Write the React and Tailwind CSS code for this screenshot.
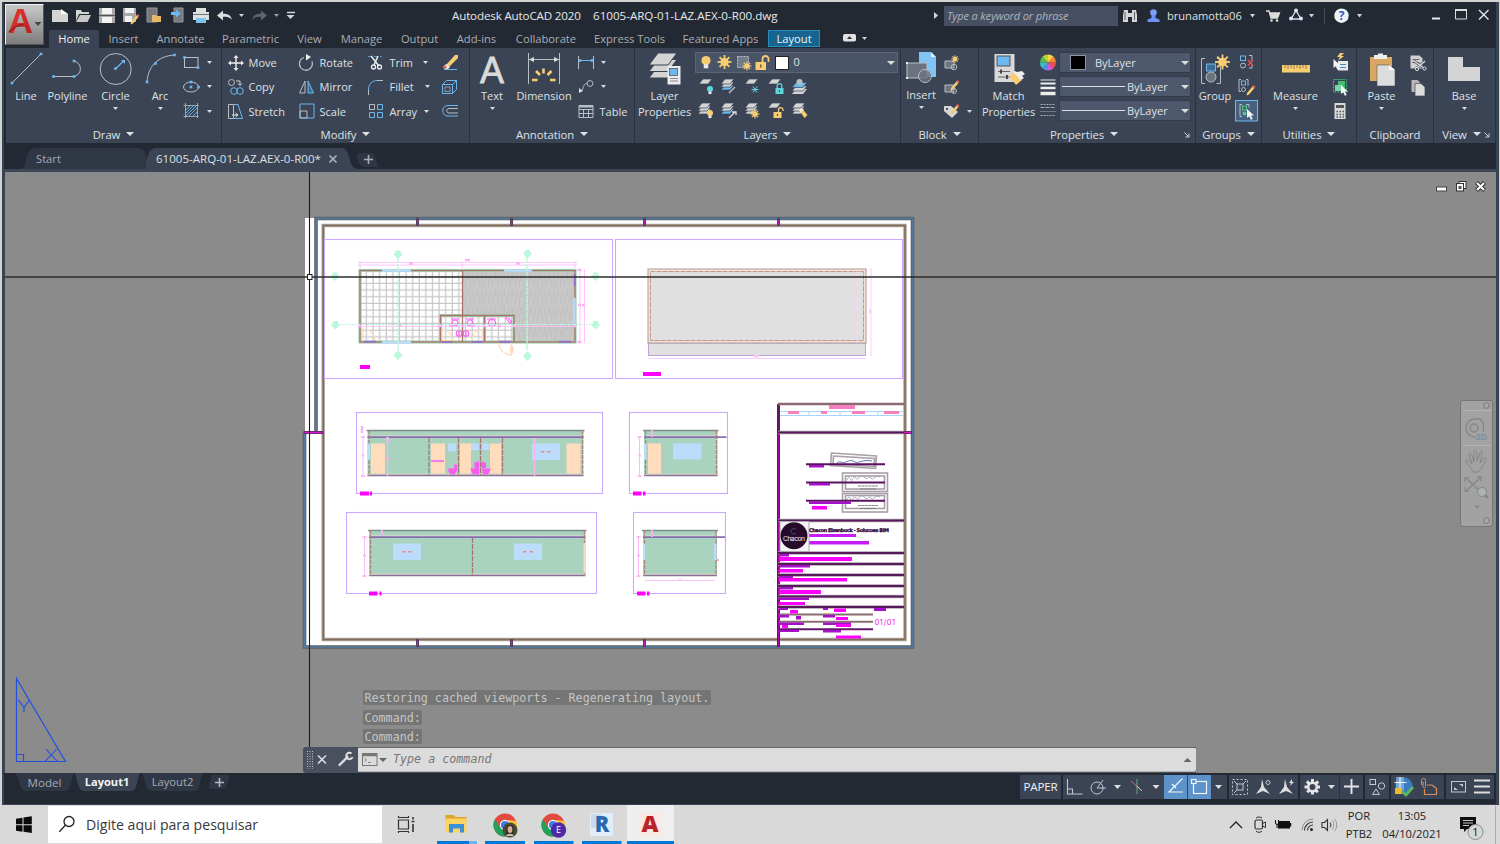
import React from "react";

const BL = "#6cb8f0";
const GR = "#d4d4d4";
const YE = "#f7cd73";

/* Icon cell: b is [x, y, width, height] on the window's own coordinate grid. */
function Ic({ b, children, className = "" }) {
  return (
    <svg
      className={"block shrink-0 " + className}
      width={b[2]}
      height={b[3]}
      viewBox={b.join(" ")}
      fill="none"
      stroke="none"
    >
      {children}
    </svg>
  );
}

function Caret({ className = "" }) {
  return (
    <svg className={"block shrink-0 " + className} width="5" height="3" viewBox="0 0 5 3">
      <path d="M0 0h5L2.5 3z" fill="#d9dce0" />
    </svg>
  );
}

function TitleCaret() {
  return (
    <svg className="ml-[6px] block shrink-0" width="8" height="4" viewBox="0 0 8 4">
      <path d="M0 0h8L4 4z" fill="#e0e2e5" />
    </svg>
  );
}

function Launcher() {
  return (
    <svg className="block shrink-0" width="6" height="6" viewBox="0 0 6 6" fill="none" stroke="#d0d3d8">
      <path d="M.5 .5l4 4M5 1.5V5H1.5" />
    </svg>
  );
}

function Panel({ w, title, arrow = true, launcher = false, children }) {
  return (
    <section className="flex h-[95px] shrink-0 flex-col border-r border-[#2a323f] bg-[#3b4454]" style={{ width: w }}>
      <div className="flex h-[78px] items-start pt-[2px]">{children}</div>
      <div className="flex h-[17px] items-center px-[5px] text-[11.3px] leading-none tracking-[-0.05px]">
        <div className="flex grow items-center justify-center whitespace-nowrap">
          {title}
          {arrow && <TitleCaret />}
        </div>
        {launcher && <Launcher />}
      </div>
    </section>
  );
}

function Big({ w, icon, label, label2, caret }) {
  return (
    <div className="flex shrink-0 flex-col items-center" style={{ width: w }}>
      {icon}
      <div className="flex h-[15px] items-center whitespace-nowrap leading-none">{label}</div>
      {label2 && <div className="flex h-[16px] items-center whitespace-nowrap leading-none">{label2}</div>}
      {caret && <Caret className="mt-[4px]" />}
    </div>
  );
}

function Row({ icon, label, caret, lw }) {
  return (
    <div className="flex h-[24.5px] items-center">
      {icon}
      {label && (
        <span className="whitespace-nowrap pl-[2.5px] leading-none" style={{ width: lw }}>
          {label}
        </span>
      )}
      {caret && <Caret />}
    </div>
  );
}

const dot = (x, y) => <rect key={x + "-" + y} x={x - 1.3} y={y - 1.3} width="2.6" height="2.6" fill={BL} />;

function Sheets({ x, y, n = 3, blue = false }) {
  return (
    <g>
      {Array.from({ length: n })
        .map((_, i) => (
          <path
            key={i}
            d={`M${x + 4} ${y + i * 3}h9l-4 5h-9z`}
            fill={blue && i === n - 1 ? BL : GR}
            stroke="#3b4454"
            strokeWidth=".7"
          />
        ))
        .reverse()}
    </g>
  );
}
const Star = ({ x, y, r = 5 }) => (
  <g>
    {[0, 45, 90, 135].map((a) => (
      <path key={a} d={`M${x - r} ${y}h${2 * r}`} stroke={YE} strokeWidth={r / 4} transform={`rotate(${a} ${x} ${y})`} />
    ))}
    <circle cx={x} cy={y} r={r * 0.58} fill={YE} />
  </g>
);
const Bulb = ({ x, y, r = 3, c = YE }) => (
  <g>
    <circle cx={x} cy={y} r={r} fill={c} />
    <rect x={x - r / 2} y={y + r * 0.8} width={r} height={r * 0.9} fill="#e8e8e8" />
  </g>
);
const Lock = ({ x, y, c = YE, open }) => (
  <g>
    <rect x={x - 4} y={y} width="8" height="6" fill={c} />
    <path d={open ? `M${x + 1} ${y}v-2a2.3 2.3 0 0 1 4.6 0v1` : `M${x - 2.3} ${y}v-2a2.3 2.3 0 0 1 4.6 0v2`} stroke={c} strokeWidth="1.3" />
    <rect x={x - 0.6} y={y + 2} width="1.2" height="2" fill="#5c553f" />
  </g>
);
const Pencil = ({ x, y }) => (
  <g>
    <path d={`M${x} ${y}l5.5-6.5 2 1.6-5.5 6.5-2.5 1z`} fill={YE} />
    <path d={`M${x + 5} ${y - 6.4}l1.3-1.5 2.2 1.6-1.3 1.6z`} fill="#e8645a" />
  </g>
);
const Cursor = ({ x, y }) => <path d={`M${x} ${y}v9l2.2-1.8 1.7 3.6 1.8-.9-1.7-3.4h3z`} fill="#f4f4f4" />;

function QuickAccess() {
  return (
    <div className="flex">
      <Ic b={[48, 4, 23, 24]}>
        <path d="M52 10h9l7 4v8H52z" fill={GR} />
        <path d="M61 9l7 5h-7z" fill="#fff" />
      </Ic>
      <Ic b={[71, 4, 24, 24]}>
        <path d="M76 10h5l1 2h7v2H79l-3 7z" fill={GR} />
        <path d="M80 15h11l-3.5 7H76z" fill="#c8c8c8" />
      </Ic>
      <Ic b={[95, 4, 24, 24]}>
        <path d="M99 8h16v15H99z" fill="#a9a9a9" />
        <path d="M102 8h10v6h-10zM102 17h10v6h-10z" fill="#f3f3f3" />
        <path d="M99 15.5h16" stroke="#555" />
      </Ic>
      <Ic b={[119, 4, 23, 24]}>
        <path d="M123 8h13v14h-13z" fill="#a9a9a9" />
        <path d="M125 8h9v5h-9zM125 16h7v6h-7z" fill="#f3f3f3" />
        <Pencil x={131} y={22} />
      </Ic>
      <Ic b={[142, 4, 24, 24]}>
        <path d="M147 8h10v14h-10z" fill="#77797c" stroke="#9a9a9a" />
        <path d="M152 15h4l1 1h4v6h-9z" fill="#e8b765" />
      </Ic>
      <Ic b={[166, 4, 23, 24]}>
        <path d="M174 8h9v14h-9z" fill="#77797c" stroke="#9a9a9a" />
        <path d="M171 12h5v-2.5l5 4-5 4V15h-5z" fill={BL} />
      </Ic>
      <Ic b={[189, 4, 24, 24]}>
        <path d="M196 8h10v4h-10zM193 12h16v8h-16z" fill="#e0e0e0" />
        <path d="M193 14.5h16" stroke="#777" />
        <path d="M196 18h10v5h-10z" fill="#7cc3f2" />
      </Ic>
      <Ic b={[213, 4, 24, 24]}>
        <path d="M217 15.500l6-5v3.200c5 0 8 1.500 9 6.300-2-3-5-3.300-9-3.300v3.800z" fill="#dcdcdc" />
      </Ic>
      <Ic b={[237, 4, 10, 24]}><path d="M239 14h5l-2.5 3z" fill={GR} /></Ic>
      <Ic b={[247, 4, 25, 24]}>
        <path d="M267 15.500l-6-5v3.200c-5 0-8 1.500-9 6.300 2-3 5-3.300 9-3.300v3.800z" fill="#5d646e" />
      </Ic>
      <Ic b={[272, 4, 10, 24]}><path d="M274 14h5l-2.5 3z" fill="#9ba0a7" /></Ic>
      <Ic b={[282, 4, 17, 24]}>
        <path d="M287 12.5h8" stroke={GR} strokeWidth="1.5" /><path d="M286.5 15h8l-4 4z" fill={GR} />
      </Ic>
    </div>
  );
}

function TitleBar() {
  return (
    <div className="flex h-[28px] items-center">
      <div className="w-[407px] pl-[3px]"><QuickAccess /></div>
      <div className="flex w-[478px] text-[11.6px] text-[#e6e8ea]">
        <span className="w-[141px] whitespace-nowrap tracking-[-0.15px]">Autodesk AutoCAD 2020</span>
        <span className="whitespace-nowrap">61005-ARQ-01-LAZ.AEX-0-R00.dwg</span>
      </div>
      <Ic b={[930, 4, 14, 24]}><path d="M934 12v7l4-3.5z" fill="#d8d8d8" /></Ic>
      <div className="flex h-[20px] w-[174px] items-center whitespace-nowrap bg-[#475062] pl-[3px] text-[11px] italic tracking-[-0.14px] text-[#aeb4be]">
        Type a keyword or phrase
      </div>
      <Ic b={[1118, 4, 24, 24]}>
        <path d="M1124 10h4v12h-5v-7zM1132 10h4l1 5v7h-5zM1128 13h4v4h-4z" fill="#d6d6d6" />
        <path d="M1125 12v8M1134.5 12v8" stroke="#59606a" />
      </Ic>
      <Ic b={[1142, 4, 25, 24]}>
        <circle cx="1153.500" cy="12.500" r="3.300" fill="#7d9df5" />
        <path d="M1151.500 15h4v3l4 1.500v2.500h-12v-2.500l4-1.500z" fill="#6f93f2" />
      </Ic>
      <span className="w-[80px] text-[11.1px] text-[#dfe1e4]">brunamotta06</span>
      <Ic b={[1247, 4, 15, 24]}><path d="M1250 14h5l-2.5 3.5z" fill={GR} /></Ic>
      <Ic b={[1262, 4, 22, 24]}>
        <path d="M1266 11h3l2 7h7M1269.500 13h10l-1.500 4-7.500 1" stroke="#dcdcdc" strokeWidth="1.300" />
        <path d="M1269.500 13h10l-1.500 4h-7.500z" fill="#dcdcdc" />
        <circle cx="1271.500" cy="20.500" r="1.300" fill="#dcdcdc" /><circle cx="1277" cy="20.500" r="1.300" fill="#dcdcdc" />
      </Ic>
      <Ic b={[1284, 4, 22, 24]}>
        <path d="M1296 10.500l5 8.500h-10z" stroke="#d6e4f5" strokeWidth="1.300" />
        <circle cx="1296" cy="10.500" r="2" fill="#d6e4f5" /><circle cx="1291" cy="18.500" r="2" fill="#d6e4f5" /><circle cx="1301" cy="18.500" r="2" fill="#d6e4f5" />
      </Ic>
      <Ic b={[1306, 4, 24, 24]}>
        <path d="M1309 14h5l-2.500 3.500z" fill={GR} /><path d="M1324.500 8v16" stroke="#434b58" />
      </Ic>
      <Ic b={[1330, 4, 22, 24]}>
        <circle cx="1341.500" cy="15.700" r="7.200" fill="#eef1f5" />
        <text x="1341.500" y="20" textAnchor="middle" fontSize="12" fontWeight="700" fill="#2e5cc0" fontFamily="Open Sans">?</text>
      </Ic>
      <Ic b={[1352, 4, 74, 24]}><path d="M1357 14h5l-2.500 3.500z" fill={GR} /></Ic>
      <Ic b={[1426, 4, 22, 24]}><path d="M1432 18.500h8" stroke="#e8e8e8" strokeWidth="2" /></Ic>
      <Ic b={[1448, 4, 24, 24]}><path d="M1455.500 10h11v9h-11z" stroke="#dcdcdc" /><path d="M1455 10h12" stroke="#dcdcdc" strokeWidth="2" /></Ic>
      <Ic b={[1472, 4, 23, 24]}><path d="M1479 10l9.500 9.500M1488.500 10l-9.500 9.500" stroke="#e8e8e8" strokeWidth="1.400" /></Ic>
    </div>
  );
}

const TABS = [
  ["Home", 50], ["Insert", 49], ["Annotate", 65], ["Parametric", 75], ["View", 43], ["Manage", 61],
  ["Output", 55], ["Add-ins", 59], ["Collaborate", 80], ["Express Tools", 87], ["Featured Apps", 95],
];

function TabRow() {
  return (
    <div className="flex h-[18px] items-stretch pl-[4px] text-[11.2px] text-[#a9aeb6]">
      {TABS.map(([t, w], i) => (
        <div
          key={t}
          className={
            i === 0
              ? "flex items-center justify-center rounded-t-[2px] bg-[#3b4454] text-[#eceef0]"
              : "flex items-center justify-center whitespace-nowrap"
          }
          style={{ width: w }}
        >
          {t}
        </div>
      ))}
      <div className="flex h-[17px] w-[52px] items-center justify-center border border-[#2a8bbf] bg-[#17648f] pt-px text-[#eef4f8]">Layout</div>
      <Ic b={[820, 30, 60, 16]}>
        <rect x="843" y="34" width="13" height="7.500" rx="1.800" fill="#e2e2e2" /><path d="M847 39h5l-2.500-3z" fill="#333" />
        <path d="M862 37h5l-2.500 3z" fill={GR} />
      </Ic>
    </div>
  );
}

function Ribbon() {
  const s = "#b9bec6";
  return (
    <div className="flex h-[95px] pl-[2px] text-[11px] text-[#dfe2e6]">
      <Panel w={216} title="Draw">
        <Big w={40} label="Line" icon={<Ic b={[6, 50, 40, 38]}><path d="M12 83l29-29" stroke={s} />{dot(12, 83)}{dot(41, 54)}</Ic>} />
        <Big w={43} label="Polyline" icon={<Ic b={[46, 50, 43, 38]}><path d="M53 76.500h20.500a7.800 7.800 0 0 0 0-15.500" stroke={s} />{dot(53.5, 76.5)}{dot(74, 76.5)}{dot(74, 61)}</Ic>} />
        <Big w={53} label="Circle" caret icon={<Ic b={[89, 50, 53, 38]}><circle cx="115.700" cy="69" r="15.500" stroke={s} /><path d="M116 68.500l8-8" stroke={BL} strokeWidth="1.200" /><path d="M121 60h4v4z" fill={BL} />{dot(115.5, 68.5)}</Ic>} />
        <Big w={36} label="Arc" caret icon={<Ic b={[142, 50, 36, 38]}><path d="M147 82c1-14 9-26 28-27" stroke={s} />{dot(147, 82)}{dot(155.5, 63.5)}{dot(174.5, 55)}</Ic>} />
        <div>
          <Row caret icon={<Ic b={[178, 52, 29, 20]}><rect x="184.500" y="57.500" width="13.500" height="10" stroke={s} />{dot(184.5, 57.5)}{dot(198, 67.5)}</Ic>} />
          <Row caret icon={<Ic b={[178, 77, 29, 20]}><ellipse cx="191" cy="87" rx="7.500" ry="5" stroke={s} />{dot(191, 87)}{dot(198.5, 87)}{dot(191, 82)}</Ic>} />
          <Row caret icon={<Ic b={[178, 101, 29, 20]}><path d="M185.500 103v15M197.500 103v15M183.500 105.500h15M183.500 116.500h15" stroke={s} strokeWidth=".8" /><path d="M186 110l4-4M186 113l7-7M186 116l10-10M189 116l8-8M193 116l4-4" stroke={BL} strokeWidth=".9" /></Ic>} />
        </div>
      </Panel>

      <Panel w={248} title="Modify">
        <div className="pl-[4px]">
          <Row label="Move" lw={51} icon={<Ic b={[226, 52, 20, 20]}><path d="M236 56v14M229 63h14" stroke="#eee" strokeWidth="1.400" /><path d="M233.500 58l2.500-3 2.500 3zM233.500 68l2.500 3 2.500-3zM231 60.500l-3 2.500 3 2.500zM241 60.500l3 2.500-3 2.500z" fill="#eee" /></Ic>} />
          <Row label="Copy" lw={51} icon={<Ic b={[226, 77, 20, 20]}><circle cx="231.500" cy="82.500" r="3" stroke={s} /><circle cx="234" cy="91" r="3.300" stroke={BL} /><circle cx="240" cy="91" r="3.300" stroke={BL} /><path d="M236 81h4v4M238 83.500l2 2 2-2" stroke={GR} /></Ic>} />
          <Row label="Stretch" lw={51} icon={<Ic b={[226, 101, 20, 20]}><path d="M228.500 104.500h5v14h-5z" stroke={s} /><path d="M234 104.500h4l4.500 14H234" stroke={BL} /><path d="M232 115h5M235.500 113l2.500 2-2.500 2" stroke="#eee" /></Ic>} />
        </div>
        <div>
          <Row label="Rotate" lw={48} icon={<Ic b={[297, 52, 20, 20]}><path d="M304 57.500a6.500 6.500 0 1 0 8 4" stroke={s} strokeWidth="1.300" /><path d="M306 54l5 3-5 3.500z" fill="#eee" /></Ic>} />
          <Row label="Mirror" lw={48} icon={<Ic b={[297, 77, 20, 20]}><path d="M305 81v12h-5.500z" stroke={s} /><path d="M308 81v12h5.500z" stroke={BL} fill="#3f6c93" /></Ic>} />
          <Row label="Scale" lw={48} icon={<Ic b={[297, 101, 20, 20]}><path d="M300 104h14v14h-14z" stroke={BL} /><path d="M300 111h7v7h-7z" stroke={s} /></Ic>} />
        </div>
        <div>
          <Row label="Trim" lw={36} caret icon={<Ic b={[365, 52, 22, 20]}><path d="M368 56.500h14" stroke="#5a95c0" strokeDasharray="4 2" /><path d="M371 56l8 10M378 56l-4 9" stroke="#eee" strokeWidth="1.500" /><circle cx="373.500" cy="67" r="2" stroke="#eee" strokeWidth="1.300" /><circle cx="379.500" cy="67" r="2" stroke="#eee" strokeWidth="1.300" /></Ic>} />
          <Row label="Fillet" lw={38} caret icon={<Ic b={[365, 77, 22, 20]}><path d="M368.500 92v-2c0-6 3.500-9.500 9-9.500" stroke={BL} /><path d="M377 80.500h6M368.500 90v5" stroke={s} /></Ic>} />
          <Row label="Array" lw={37} caret icon={<Ic b={[365, 101, 22, 20]}><path d="M369.500 104.500h5v5h-5z" stroke={s} /><path d="M377.500 104.500h5v5h-5zM369.500 112.500h5v5h-5zM377.500 112.500h5v5h-5z" stroke={BL} /></Ic>} />
        </div>
        <div className="ml-[7px]">
          <Row icon={<Ic b={[437, 52, 22, 20]}><path d="M444 69.500h13" stroke={BL} /><path d="M446 65l9-10h3v3l-9 9z" fill={YE} /><path d="M443 67l3-3 4 3-2 2h-3z" fill="#f3e9e5" /><path d="M443 67l2-2 2 2.500-2 1.500z" fill="#e8645a" /></Ic>} />
          <Row icon={<Ic b={[437, 77, 22, 20]}><path d="M442.500 84.500h10v9h-10zM442.500 84.500l4-4h10v9l-4 4M452.500 84.500l4-4" stroke={BL} /><path d="M445 87h5v4.500h-5z" stroke={s} strokeWidth=".7" /></Ic>} />
          <Row icon={<Ic b={[437, 101, 22, 20]}><path d="M458 105.500h-10c-7 0-7 10.500 0 10.500h10" stroke={BL} /><path d="M458 108.500h-9c-3 0-3 4.500 0 4.500h9" stroke={s} /></Ic>} />
        </div>
      </Panel>

      <Panel w={165} title="Annotation">
        <Big w={44} label="Text" caret icon={<Ic b={[470, 50, 44, 38]} className="overflow-visible"><text x="492" y="82.500" textAnchor="middle" fontFamily="Liberation Sans" fontSize="37" fill="#dadada" stroke="#dadada" strokeWidth=".8" textLength="24" lengthAdjust="spacingAndGlyphs">A</text></Ic>} />
        <Big w={60} label="Dimension" icon={<Ic b={[514, 50, 60, 38]}><path d="M528.500 53v31M559.500 53v31M529 59.500h30" stroke={s} /><path d="M529 59.500l5-2.500v5zM559 59.500l-5-2.500v5z" fill="#ddd" /><path d="M536 71l4 4M543.500 68.500v5M551.500 71l-4 4M532 80h5.500M550 80h5.500" stroke={YE} strokeWidth="2.600" /></Ic>} />
        <div>
          <Row caret icon={<Ic b={[574, 52, 27, 20]}><path d="M578.500 56v13M593.500 56v13" stroke={s} /><path d="M580 60.500h12" stroke={BL} />{dot(580, 60.5)}{dot(592, 60.5)}</Ic>} />
          <Row caret icon={<Ic b={[574, 77, 27, 20]}><circle cx="590" cy="83.500" r="2.900" stroke={s} /><path d="M587 83.500c-4 0-3 5-6 8" stroke={s} /><path d="M579 93v-5l4 3z" fill="#ddd" /></Ic>} />
          <Row label="Table" lw={34} icon={<Ic b={[574, 101, 23, 20]}><path d="M579 105.500h14v12h-14zM579 109.500h14M579 113.500h14M583.500 109v9M588.500 109v9" stroke={s} /><path d="M579 105.500h14v2h-14z" fill={s} /></Ic>} />
        </div>
      </Panel>

      <Panel w={266} title="Layers">
        <Big w={59} label="Layer" label2="Properties" icon={<Ic b={[635, 50, 59, 38]}>
          <path d="M658 66h19l-9 12h-19z" fill={GR} stroke="#3b4454" /><path d="M658 59.500h19l-9 12h-19z" fill={GR} stroke="#3b4454" /><path d="M658 53h19l-9 12h-19z" fill={GR} stroke="#3b4454" />
          <rect x="667.500" y="66" width="13" height="18.500" fill="#ececec" /><rect x="669.500" y="68.500" width="8" height="7" fill={BL} stroke="#555" strokeWidth=".8" /><path d="M670 78.500h8M670 81h8" stroke="#888" />
        </Ic>} />
        <div>
          <div className="ml-px mt-[2px] flex h-[21px] w-[203px] items-center border border-[#5a657a] bg-[#4a5467]">
            <Ic b={[696, 53, 20, 19]}><Bulb x={706} y={60.5} r={4.6} /></Ic>
            <Ic b={[716, 53, 18, 19]}><Star x={724.5} y={62} r={7} /></Ic>
            <Ic b={[734, 53, 19, 19]}><path d="M737.500 56.500h11v11h-11z" stroke={s} strokeDasharray="2 1" fill="#737c8a" /><Star x={747} y={66} r={4.5} /></Ic>
            <Ic b={[753, 53, 20, 19]}><rect x="755.500" y="62" width="10.500" height="8" fill={YE} /><path d="M762.500 62v-3a3 3 0 0 1 6 0v3" stroke={YE} strokeWidth="1.800" /><rect x="760" y="64.500" width="1.500" height="3" fill="#6f5e33" /></Ic>
            <div className="ml-[2px] h-[14px] w-[13.5px] border border-[#222] bg-white" />
            <span className="ml-[5px] grow">0</span>
            <Ic b={[886, 53, 12, 19]}><path d="M888 61h8l-4 4z" fill="#dcdcdc" /></Ic>
          </div>
          <div className="flex h-[24px] items-center pt-[4px]">
            <Ic b={[694, 77, 23, 20]}><Sheets x={699} y={79} n={1} /><Bulb x={710} y={89} c="#5fd6dc" /></Ic>
            <Ic b={[717, 77, 24, 20]}><Sheets x={721} y={79} blue /><path d="M729 93l6-6" stroke="#bbb" strokeWidth="1.500" /></Ic>
            <Ic b={[741, 77, 24, 20]}><Sheets x={745} y={79} n={1} /><path d="M751.500 89.500h7M753 86.500l4 6M757 86.500l-4 6" stroke="#5fd6dc" /></Ic>
            <Ic b={[765, 77, 24, 20]}><Sheets x={768} y={79} n={1} /><Lock x={779.5} y={88} c="#5fd6dc" /></Ic>
            <Ic b={[789, 77, 24, 20]}><path d="M796 89h11l-4 5h-11z" fill={GR} /><path d="M796 86h11l-4 5h-11z" fill={GR} stroke="#3b4454" strokeWidth=".7" /><path d="M796 82.500h11l-4 5h-11z" fill={BL} stroke="#3b4454" strokeWidth=".7" /><circle cx="799.500" cy="82" r="3" fill="#bdbdbd" /></Ic>
          </div>
          <div className="flex h-[24px] items-center pt-[4px]">
            <Ic b={[694, 101, 23, 20]}><Sheets x={698} y={103} /><Bulb x={710} y={113} /></Ic>
            <Ic b={[717, 101, 24, 20]}><Sheets x={721} y={103} blue /><path d="M729 118l6-6M732 112h4v3" stroke="#ddd" strokeWidth="1.300" /></Ic>
            <Ic b={[741, 101, 24, 20]}><Sheets x={745} y={103} /><Star x={755} y={114} r={4.5} /></Ic>
            <Ic b={[765, 101, 24, 20]}><Sheets x={768} y={103} n={1} /><Lock x={777.5} y={112} open /></Ic>
            <Ic b={[789, 101, 24, 20]}><Sheets x={792} y={103} /><path d="M799 110l2.500-2 6 7-3 3z" fill={YE} /><path d="M799 110l2.500-2 1.500 2-2.500 2z" fill="#eee" /></Ic>
          </div>
        </div>
      </Panel>

      <Panel w={78} title="Block">
        <Big w={40} label="Insert" caret icon={<Ic b={[901, 50, 40, 37]}><path d="M919 52h12l5 5v20h-17z" fill="#81c4f3" /><path d="M931 52l5 5h-5z" fill="#d9effc" /><path d="M907 63h20v15h-20z" fill="#6d737e" stroke={s} /><circle cx="925" cy="76" r="6.500" fill="#6d737e" fillOpacity=".8" stroke={s} />{[[907, 63], [907, 78]].map((p) => <rect key={p[1]} x={p[0] - 1} y={p[1] - 1} width="2" height="2" fill="#eee" />)}</Ic>} />
        <div>
          <Row icon={<Ic b={[941, 52, 25, 20]}><path d="M945 61h9v7h-9z" fill="#6d737e" stroke={s} /><circle cx="954" cy="67" r="2.800" stroke={s} /><Star x={955} y={59} r={3.8} /></Ic>} />
          <Row icon={<Ic b={[941, 77, 25, 20]}><path d="M945 85h9v7h-9z" fill="#6d737e" stroke={s} /><circle cx="954" cy="91" r="2.500" stroke={s} /><Pencil x={951} y={88} /></Ic>} />
          <Row caret icon={<Ic b={[941, 101, 26, 20]}><path d="M944 106h7l7 6-6 6-8-7z" fill={GR} /><circle cx="947" cy="109" r="1" fill="#333" /><Pencil x={951} y={112} /></Ic>} />
        </div>
      </Panel>

      <Panel w={217} title="Properties" launcher>
        <Big w={59} label="Match" label2="Properties" icon={<Ic b={[979, 50, 59, 38]}><rect x="994.500" y="54" width="20" height="28" fill="#d9d9d9" /><rect x="997" y="56" width="13" height="10" fill={BL} stroke="#555" /><path d="M998 71.500h12M998 77h12" stroke="#666" /><path d="M1001 69.500v4M1007 75v4" stroke="#444" strokeWidth="2" /><path d="M1009 76l6-5 7 9-6 5z" fill={YE} /><path d="M1014 71l3 1 5-1 3 3-3 2 2 2-3 2-7-7z" fill="#eee" /></Ic>} />
        <div className="w-[21px]">
          <Row icon={<Ic b={[1038, 52, 21, 20]}>
            <g transform="translate(1048 62.500)">
              {["#ffd23e", "#f5873b", "#e8504e", "#d556c9", "#4f8df0", "#3ac3c9", "#58bb4d", "#b6d33f"].map((c, i) => (
                <path key={c} d="M0 0L0-8A8 8 0 0 1 5.660-5.660z" fill={c} transform={`rotate(${i * 45})`} />
              ))}
            </g>
          </Ic>} />
          <Row icon={<Ic b={[1038, 77, 21, 20]}><path d="M1040.500 80h15" stroke="#eee" /><path d="M1040.500 83.500h15" stroke="#eee" strokeWidth="2" /><path d="M1040.500 88h15" stroke="#eee" strokeWidth="2.500" /><path d="M1040.500 93.500h15" stroke="#eee" strokeWidth="3.500" /></Ic>} />
          <Row icon={<Ic b={[1038, 101, 21, 20]}><path d="M1040.500 104.500h15M1040.500 115.500h15" stroke="#aab" strokeDasharray="2 1" /><path d="M1040.500 107.500h15" stroke="#aab" strokeDasharray="4 1" /><path d="M1040.500 111.500h15" stroke="#aab" strokeDasharray="1 1" /></Ic>} />
        </div>
        <div className="flex flex-col gap-[3px] pt-[2px]">
          <div className="flex h-[21px] w-[132px] items-center border border-[#333c4a] bg-[#4d586d]">
            <div className="ml-[10px] h-[15px] w-[16px] border border-[#8d95a3] bg-black" />
            <span className="ml-[9px] grow pt-px">ByLayer</span>
            <Ic b={[1180, 53, 11, 19]}><path d="M1182 61h8l-4 4z" fill="#dcdcdc" /></Ic>
          </div>
          {[0, 1].map((k) => (
            <div key={k} className="flex h-[21px] w-[132px] items-center border border-[#333c4a] bg-[#4d586d]">
              <div className="ml-[2px] h-px w-[63px] bg-[#e0e2e6]" />
              <span className="ml-[2px] grow pt-px">ByLayer</span>
              <Ic b={[1180, 53, 11, 19]}><path d="M1182 61h8l-4 4z" fill="#dcdcdc" /></Ic>
            </div>
          ))}
        </div>
      </Panel>

      <Panel w={66} title="Groups">
        <Big w={38} label="Group" icon={<Ic b={[1196, 50, 38, 38]}><path d="M1205 58.500h-3.500v25h3.500M1217 58.500h3.500M1220.500 66v17.500h-4" stroke={s} /><rect x="1206.500" y="64" width="9" height="7" fill="#3f6c93" stroke={BL} /><circle cx="1211" cy="77" r="5" fill="#6d737e" stroke={s} /><Star x={1222.5} y={62} r={7.5} /></Ic>} />
        <div>
          <Row icon={<Ic b={[1234, 52, 25, 20]}><path d="M1249 55.500h3v5M1252 65v3h-3" stroke={s} /><rect x="1240.500" y="56" width="5" height="4.500" stroke={BL} /><circle cx="1243" cy="65.500" r="2.500" stroke={s} /><path d="M1248 60l5 5.500M1253 60l-5 5.500" stroke="#e8504e" strokeWidth="1.500" /></Ic>} />
          <Row icon={<Ic b={[1234, 77, 25, 20]}><path d="M1241 79.500h-2v12h2M1246 79.500h2v6" stroke={s} /><rect x="1241.500" y="81" width="4" height="4" stroke={BL} /><circle cx="1243.500" cy="89.500" r="2" stroke={s} /><Pencil x={1247} y={93} /></Ic>} />
          <Row icon={<Ic b={[1234, 100, 25, 22]}><rect x="1235.500" y="100.500" width="22" height="20.500" stroke={BL} fill="#46617f" /><path d="M1242 104.500h-2v12h2M1246 104.500h3v3" stroke={s} /><rect x="1242.500" y="106" width="4" height="4" stroke="#58c58a" /><circle cx="1244.500" cy="113.500" r="2" fill="#58c58a" /><Cursor x={1247} y={109} /></Ic>} />
        </div>
      </Panel>

      <Panel w={95} title="Utilities">
        <Big w={67} label="Measure" caret icon={<Ic b={[1262, 50, 67, 38]}><rect x="1282" y="65" width="28" height="7.500" fill={YE} /><path d="M1285 65v3M1288 65v4M1291 65v3M1294 65v4M1297 65v3M1300 65v4M1303 65v3M1306 65v4" stroke="#86683a" strokeWidth=".8" /></Ic>} />
        <div>
          <Row icon={<Ic b={[1329, 52, 24, 20]}><rect x="1338" y="61" width="10" height="9.500" fill="#e8e8e8" /><path d="M1340 64.500h6M1340 67.500h6" stroke="#3b8ed0" /><path d="M1340 53l-3 4h3l-2 4 6-5h-3l3-3z" fill={YE} /><Cursor x={1333.5} y={59} /></Ic>} />
          <Row icon={<Ic b={[1329, 77, 24, 20]}><rect x="1333.500" y="79.500" width="13" height="12.500" stroke="#48ba76" strokeDasharray="2 1" /><rect x="1338" y="81" width="7" height="7" fill="#48ba76" /><rect x="1335" y="85" width="7" height="6" fill="#7bd7a0" /><Cursor x={1341} y={85} /></Ic>} />
          <Row icon={<Ic b={[1329, 101, 24, 20]}><rect x="1334.500" y="103" width="11" height="16" fill="#d9d9d9" /><rect x="1336" y="105" width="8" height="3" fill="#555" /><path d="M1336.500 111.500h8M1336.500 114.500h8M1336.500 117h8" stroke="#555" strokeDasharray="1.5 1.5" strokeWidth="1.500" /></Ic>} />
        </div>
      </Panel>

      <Panel w={77} title="Clipboard" arrow={false}>
        <Big w={49} label="Paste" caret icon={<Ic b={[1357, 50, 49, 38]}><path d="M1370 57h22v24h-22z" fill="#d9a762" /><rect x="1374" y="55" width="13" height="4" fill="#eee" /><rect x="1378" y="53.500" width="5" height="3" fill="#eee" /><path d="M1377 65h12l6 5v16h-18z" fill="#dcdcdc" stroke="#3b4454" strokeWidth=".5" /><path d="M1389 65l6 5h-6z" fill="#fff" /></Ic>} />
        <div>
          <Row icon={<Ic b={[1406, 52, 24, 20]}><path d="M1410.500 55.500h9l3 3v10h-12z" fill="#d0d0d0" /><path d="M1412.500 59.500h7M1412.500 62.500h7" stroke="#666" /><path d="M1414 61l11 8M1425 61l-9 8" stroke="#3b4454" strokeWidth="2.600" /><path d="M1414 61l9 6.500M1425 61l-8 7" stroke="#ddd" strokeWidth="1.400" /><circle cx="1424.500" cy="68.500" r="1.600" stroke="#ddd" /><circle cx="1417" cy="69" r="1.600" stroke="#ddd" /></Ic>} />
          <Row icon={<Ic b={[1406, 77, 24, 20]}><path d="M1411.500 80h6l3 3v9h-9z" fill="#b8b8b8" /><path d="M1415 83.500h6l4 3.500v9h-10z" fill="#dcdcdc" stroke="#3b4454" strokeWidth=".7" /></Ic>} />
        </div>
      </Panel>

      <Panel w={62} title="View" launcher>
        <Big w={60} label="Base" caret icon={<Ic b={[1434, 50, 60, 38]}><path d="M1448 57h15v10h17v14h-32z" fill="#d4d4d4" /></Ic>} />
      </Panel>
    </div>
  );
}

function TabShape({ w, h, color, d }) {
  return (
    <svg className="absolute left-0 top-0" width={w} height={h} viewBox={`0 0 ${w} ${h}`}>
      <path d={d} fill={color} />
    </svg>
  );
}

function DocTabs() {
  return (
    <div className="flex h-[26px] items-end pl-[14px] text-[11.55px]">
      <div className="relative flex h-[21px] w-[128px] items-center pl-[18px] pt-px text-[11.2px] text-[#a4aab4]">
        <TabShape w={128} h={21} color="#2f3744" d="M0 21c6 0 7-4 8-9C10 3 12 0 18 0h102c5 0 8 4 8 9v12z" />
        <span className="relative">Start</span>
      </div>
      <div className="relative flex h-[21px] w-[212px] items-center pl-[10px] text-[#dde0e4]">
        <TabShape w={212} h={21} color="#3b4454" d="M0 21c-1-10 3-21 10-21h185c6 0 7 6 9 12 1 5 4 9 8 9z" />
        <span className="relative w-[173px] whitespace-nowrap">61005-ARQ-01-LAZ.AEX-0-R00*</span>
        <svg className="relative block" width="8" height="8" viewBox="0 0 8 8"><path d="M.5 .5l7 7M7.500 .5l-7 7" stroke="#a8adb5" strokeWidth="1.600" /></svg>
      </div>
      <div className="relative -ml-px flex h-[16px] w-[22px] items-center justify-center self-end">
        <TabShape w={22} h={16} color="#2f3744" d="M0 4c0-3 2-4 4-4h11c4 0 4 12 7 14H7C3 14 2 10 0 4z" />
        <svg className="relative mb-[3px] block" width="9" height="9" viewBox="0 0 9 9"><path d="M4.500 0v9M0 4.500h9" stroke="#a8adb5" strokeWidth="1.600" /></svg>
      </div>
    </div>
  );
}

const Rects = ({ list, fill }) => list.map((r, i) => <rect key={i} x={r[0]} y={r[1]} width={r[2]} height={r[3]} fill={fill} />);

function Elevation({ x, y, w, h, cols = [], doors = [], windows = [], side }) {
  return (
    <g>
      <rect x={x} y={y} width={w} height={h} fill="#a9d2bf" />
      <path d={`M${x - 1} ${y + 0.5}h${w + 2}`} stroke="#7e8f86" strokeWidth="1.300" />
      <path d={`M${x + 2} ${y + 6}h${w - 4}`} stroke="#e8dcc8" />
      <path d={`M${x} ${y + 7.2}h${w + (side || 0)}`} stroke="#8a6db0" strokeWidth="1.700" />
      <path d={`M${x} ${y + h - 1.8}h${w}`} stroke="#e8dcc8" />
      <path d={`M${x} ${y + h - 0.5}h${w}`} stroke="#8a6f9c" strokeWidth="1.500" />
      <path d={`M${x + 1.5} ${y}v${h}M${x + w - 1} ${y}v${h}`} stroke="#a98279" strokeWidth="1.300" strokeDasharray="4 1" />
      {cols.map((c) => <path key={c} d={`M${c} ${y + 8}v${h - 8}`} stroke="#a47570" strokeWidth="1.200" strokeDasharray="5 1" />)}
      <Rects list={windows} fill="#bcdcfb" />
      <Rects list={doors} fill="#ffdcbc" />
      <g stroke="#ffb8fa" strokeWidth="1">
        <path d={`M${x - 4.5} ${y + 7}v${h - 7}`} />
        <path d={`M${x - 6.5} ${y + 7}h4M${x - 6.5} ${y + h}h4M${x - 6} ${y + 25.5}h3`} strokeWidth="2" />
      </g>
    </g>
  );
}

const Mark = ({ x, y }) => (
  <g fill="#b9f8da"><path d={`M${x - 2.5} ${y - 3.5}h5v2.500h1.500v2l-4 4-4-4v-2h1.500z`} /></g>
);

function Drawing() {
  const ticks = [417.5, 511.5, 644.5, 778.5];
  return (
    <svg className="block" width="1491" height="601" viewBox="5 172 1491 601" fill="none">
      <defs>
        <pattern id="tiles" x="360.500" y="270.500" width="6.600" height="6.700" patternUnits="userSpaceOnUse">
          <path d="M6 0v6.700M0 6h6.600" stroke="#c6c6c6" strokeWidth="1.200" />
        </pattern>
        <pattern id="deck" width="9" height="17" patternUnits="userSpaceOnUse">
          <rect width="9" height="17" fill="#c8c8c8" />
          <path d="M.5 0v7M2.500 6v9M4.500 1v10M6.500 8v9M8 2v7" stroke="#bdbdbd" strokeWidth=".7" />
        </pattern>
      </defs>
      <path d="M305 218h608v430h-608z" fill="#fff" />
      {/* sheet frame */}
      <path d="M304.500 432.500v214.500h608v-428.500h-596.500v214" stroke="#5c5f63" strokeWidth="3.600" />
      <path d="M304.500 432.500v214.500h608v-428.500h-596.500v214" stroke="#557ca3" strokeWidth="1.700" />
      <path d="M323.200 225.500h581.800v414h-581.800z" stroke="#aaa39c" strokeWidth="3.400" />
      <path d="M323.200 225.500h581.800v414h-581.800z" stroke="#836c57" strokeWidth="1.500" />
      {ticks.map((t) => (
        <g key={t}>
          <path d={`M${t} 218v8M${t} 639v8`} stroke="#55405a" strokeWidth="3" />
          <path d={`M${t} 220v5M${t} 641v5`} stroke="#c416c0" strokeWidth="1.200" />
        </g>
      ))}
      <path d="M303.500 432.500h20M903 432.500h9" stroke="#702a70" strokeWidth="3" />
      <path d="M304.500 432.500h18M904 432.500h7" stroke="#e012d8" strokeWidth="1.200" />

      {/* viewports */}
      <g stroke="#cda8ff" strokeWidth="1.100">
        <rect x="324.500" y="239.500" width="288" height="139" /><rect x="615.500" y="239.500" width="287" height="139" />
        <rect x="356.500" y="412.500" width="246" height="81" /><rect x="629.500" y="412.500" width="98" height="81" />
        <rect x="346.500" y="512.500" width="250" height="81" /><rect x="633.500" y="512.500" width="92" height="81" />
      </g>

      {/* floor plan */}
      <rect x="360" y="270" width="103" height="72" fill="url(#tiles)" />
      <rect x="463" y="270" width="112" height="72" fill="url(#deck)" />
      <rect x="440" y="315" width="74" height="27" fill="#fff" />
      <rect x="440" y="315" width="74" height="27" fill="url(#tiles)" />
      <g stroke="#a6d0b6" strokeWidth="3.200">
        <rect x="360" y="270.500" width="215" height="71.500" /><path d="M440.500 342v-26.500h73.500v26.500M484.500 316v26" />
      </g>
      <g stroke="#a8736b" strokeWidth="1.300">
        <rect x="360" y="270.500" width="215" height="71.500" /><path d="M462.500 270v72M440.500 342v-26.500h73.500v26.500M484.500 316v26" />
      </g>
      <path d="M382 270.500h29M504 270.500h28M382 342.300h29M574.500 298v26" stroke="#b9dcfb" strokeWidth="2.400" />
      <path d="M364 341.700h12M442 342h10M472 342h11M499 341.700h12M559 341.700h12M574.800 274v12" stroke="#9b6fc8" strokeWidth="2" />
      <path d="M442 340.500h10" stroke="#efe070" />
      <path d="M511.500 343v12c-7 0-12-5-13-12M363 340v-11c6 0 11 4 12 11M442 340v-10c6 0 10 4 11 10M482 340v-10c-6 0-9 4-10 10" stroke="#ffdcbc" strokeWidth="1.200" />
      <rect x="510" y="346" width="3.500" height="7" fill="#ffdcbc" />
      <g stroke="#fb5cf4" strokeWidth="1.100">
        <circle cx="455" cy="323" r="3" /><circle cx="470" cy="323" r="3" /><circle cx="492" cy="323" r="3.500" /><circle cx="459" cy="333.500" r="2.800" /><circle cx="466" cy="333.500" r="2.800" />
        <path d="M451 319h8M466 319h8M487 319h9M459 331v5M466 331v5M506 317c0 3 3 6 6 6M508 318l4 4" />
      </g>
      <g stroke="#ffc4fb" strokeWidth="1">
        <path d="M358 262.500h219M358 265h219M360 261v7M462 261v7M575 261v7M580 269v74M584.500 269v74M360 326.300h215" />
        <path d="M465 260h5M409 263.500h4M516 263.500h4M398 325.500h4M542 325.500h4M582 305h3M578 305h3M358 326h3M438 326h3M461 326h3M483 326h3M513 326h3M573 326h3M449 326h4M471 326h4M497 326h4M577.500 270h4M577.500 342h4" strokeWidth="2.500" stroke="#ffb0f8" />
      </g>
      <g stroke="#b9f8da"><path d="M398 256v98M527 256v98" strokeDasharray="7 1" strokeWidth="1.300" /><path d="M337 324.500h256" strokeDasharray="2 1" /></g>
      <Mark x={398} y={254} /><Mark x={527.5} y={253.5} /><Mark x={398} y={355} /><Mark x={527.5} y={356} />
      <Mark x={335} y={276} /><Mark x={595.5} y={276} /><Mark x={335.5} y={324.5} /><Mark x={595.5} y={324.5} />

      {/* roof plan */}
      <rect x="648.500" y="343" width="217" height="12.500" fill="#e0e0e0" stroke="#c0a2dc" />
      <rect x="648" y="269" width="218" height="74" fill="#fbe0d6" stroke="#a39d99" />
      <rect x="650.500" y="271.500" width="213" height="69" fill="#e0e0e0" stroke="#bb9a8f" strokeDasharray="5 1" />
      <g stroke="#ffcdfb"><path d="M648 358.500h218M871 268v88M857 269v74" /><path d="M754 356.500h5M870 309.500v4M856.500 303.500v4" strokeWidth="2.500" /></g>
      <Rects fill="#ff00ff" list={[[360, 365, 10, 4], [643, 372, 18, 4], [360, 491.5, 9, 4], [370, 491.5, 2, 4], [633, 491.5, 8.5, 4], [643, 491.5, 2.5, 4], [369, 591.5, 8.5, 4], [379.5, 591.5, 2, 4], [637, 591.5, 8.5, 4], [647, 591.5, 2.5, 4]]} />

      {/* sections and elevations */}
      <Elevation x={367.5} y={430} w={216} h={46} cols={[429, 458.5, 480.5, 502.5]}
        doors={[[371, 443.5, 14, 30], [431, 443.5, 14, 30], [460, 443.5, 11, 30], [490, 443.5, 11, 30], [566.5, 443.5, 14, 30]]}
        windows={[[448, 443.5, 8, 8], [471, 443.5, 8, 6.5], [482, 443.5, 7.5, 6.5], [532, 443.5, 28, 16.5], [367.5, 443.5, 2.5, 16]]} />
      <path d="M431 461h13" stroke="#fb6cf0" strokeWidth="1.800" />
      <path d="M448 468.500h9v2l-2.500 4h-4l-2-3zM454 464l3.500 1.500v4h-3zM470 468.500h9v6h-6zM474 463l5-2v8h-4zM481 461l5 2v5h-5zM482 468.500h9l-3 6h-5z" fill="#fb5cf0" />
      <path d="M387.500 438v38M534.500 438v38" stroke="#f5b8ee" strokeWidth="1.200" />
      <path d="M387.500 437v5M387.500 457v3M534.500 438v4M534.500 450v3M362 426v7" stroke="#f8b4f2" strokeWidth="2.500" />
      <path d="M541 451.700h3.500M547 451.700h3.500" stroke="#e88a90" strokeWidth="1.500" />
      <Elevation x={644} y={430} w={73.5} h={46} side={9} doors={[[648, 443.5, 13, 30]]} windows={[[673, 443.5, 28.5, 16], [644, 443.5, 2.5, 16]]} />
      <Elevation x={369} y={530} w={216.5} h={46} cols={[472.5]} doors={[[583.5, 543, 2, 30]]} windows={[[393, 543.5, 28, 16.5], [514, 543.5, 28, 16.5]]} />
      <path d="M402 551.700h3.500M408 551.700h3.500M523 551.700h3.500M529.500 551.700h3.500" stroke="#e88a90" strokeWidth="1.500" />
      <Elevation x={643} y={530} w={74} h={46} side={8} windows={[[643, 543.5, 2.5, 16.5], [714, 543.5, 2.5, 16.5]]} />
      <path d="M652 430v7M652 530v7M382 530v6" stroke="#f5b0ee" strokeWidth="2" />
      <path d="M645 580.500h70M678 579h4" stroke="#ffc0fb" />
      <path d="M717 560h2" stroke="#f5a" />

      {/* title block */}
      <path d="M778.500 404v243" stroke="#5f1a60" strokeWidth="3" /><path d="M778.500 432v215" stroke="#a508a2" strokeWidth="1" />
      <path d="M778 404h126" stroke="#8a6a72" strokeWidth="2.500" />
      <path d="M780 411.500h124M780 415.500h124M809 411v5M840 411v5M878 411v5" stroke="#a8d4fa" />
      <Rects fill="#f57fbf" list={[[829, 405, 26, 4], [788, 411, 11, 3], [821, 411, 6, 3], [852, 411, 13, 3], [884, 411, 15, 3]]} />
      <g stroke="#b0a2b0" strokeWidth="3.600">
        <path d="M778 432.500h126M778 520.500h126M778 553h126M778 564h126M778 575h126M778 586h126M778 596.500h126M778 607h126" />
      </g>
      <path d="M778 432.500h126M778 520.500h126M778 553h126M778 564h126M778 575h126M778 586h126M778 596.500h126M778 607h126" stroke="#561a5a" strokeWidth="1.900" />
      <path d="M779 614.500h94M779 621.800h94" stroke="#8a6d70" strokeWidth="2" /><path d="M779 629.300h94" stroke="#641668" strokeWidth="2" />
      <g stroke="#a99fa9" strokeWidth="1.600">
        <path d="M831.500 453l45 3-1 12.500-45-3zM833.500 456l41 2.500-.5 8-41-2.500z" />
        <rect x="842.500" y="473" width="45" height="18.500" /><rect x="845.500" y="476" width="39" height="13" /><rect x="842.500" y="493.500" width="45" height="18.500" /><rect x="845.500" y="495.500" width="39" height="13" />
      </g>
      <path d="M837 463c3-3 5 1 9-1s6-2 9 0 8-3 17-1" stroke="#6372b8" />
      <path d="M847 480c1-4 3-3 4 0s2-4 4-3 1 4 4 1 3-3 6 0 4-4 6 0 3-4 9-1M847 500c1-4 3-3 4 0s2-4 4-3 1 4 4 1 3-3 6 0 4-4 6 0 3-4 9-1" stroke="#a5a5b5" strokeWidth=".9" />
      <path d="M858 486h20M860 489h16M858 505.500h20M860 508.500h16" stroke="#777" strokeDasharray="3 .5" strokeWidth=".9" />
      <path d="M806 464.300h79M806 482.500h79M806 500.700h79" stroke="#5b1060" strokeWidth="1.900" />
      <Rects fill="#a411c8" list={[[809, 465, 15, 2.5], [809, 483, 21, 2.5], [809, 501.5, 42, 2.5], [779, 554, 10, 2.5], [779, 565, 31, 2.5], [779, 576, 14, 2.5], [779, 587, 14, 2.5], [779, 597.5, 30, 2.5], [779, 608, 9, 2], [823, 608, 5, 2], [874, 608, 12, 3], [779, 615, 10, 2.5], [823, 615, 12, 2.5], [779, 622.5, 25, 2.5], [823, 622.5, 28, 2.5], [779, 630, 20, 2], [823, 630, 18, 2.5], [796, 616, 5, 3.5]]} />
      <Rects fill="#c51df5" list={[[809, 534, 47, 3], [809, 541, 60, 3.5]]} />
      <Rects fill="#ff00ff" list={[[812, 506, 15, 3.5], [779, 557, 73, 4], [779, 569, 24, 3.5], [779, 578, 68, 3.5], [779, 590, 42, 4], [779, 602, 26, 3], [834, 608.5, 12, 3.5], [790, 610, 8, 3.5], [836, 617, 12, 3], [836, 624, 15, 3], [782, 625, 6, 3], [836, 635.5, 25, 3]]} />
      <rect x="780" y="521.500" width="29" height="30" fill="#f5f2f5" stroke="#aaa" />
      <circle cx="794" cy="535.700" r="13.500" fill="#260a2c" />
      <path d="M796 529.500a2.800 2.800 0 1 0 0 3.500" stroke="#3b4a75" />
      <text x="794" y="541" textAnchor="middle" fontFamily="Inter" fontSize="6.800" fill="#f0e8f0" textLength="22">Chacon</text>
      <text x="809" y="532" fontFamily="DejaVu Sans" fontWeight="700" fontSize="5" fill="#32063a" stroke="#32063a" strokeWidth=".3" textLength="80">Chacon Eisenbock - Solucoes BIM</text>
      <text x="874.500" y="625.300" fontFamily="Inter" fontSize="7.500" fill="#f410ee" textLength="20.500">01/01</text>

      {/* layout UCS icon */}
      <path d="M16.500 678.500v83h49zM16.500 754.500h7v7" stroke="#2450e0" strokeWidth="1.200" />
      <text x="17.500" y="711.500" fontFamily="Open Sans" fontWeight="300" fontSize="16" fill="#2450e0" textLength="12.500" lengthAdjust="spacingAndGlyphs">Y</text>
      <text x="44.500" y="760.500" fontFamily="Open Sans" fontWeight="300" fontSize="16" fill="#2450e0" textLength="13" lengthAdjust="spacingAndGlyphs">X</text>

      {/* crosshair */}
      <path d="M309.500 172v601" stroke="#1c1c1c" strokeWidth="1.100" /><path d="M5 277h1491" stroke="#2b2b2b" strokeWidth="1.400" />
      <rect x="307.500" y="274.500" width="4.500" height="5" fill="#fff" stroke="#222" />
    </svg>
  );
}

function NavBar() {
  return (
    <div className="absolute right-[3px] top-[228px] rounded-[3px] border border-[#757575] bg-[#a2a2a2]">
      <svg className="block" width="31" height="125" viewBox="1461 401 31 125" fill="none" stroke="#868686">
        <circle cx="1486.500" cy="405.500" r="3" fill="#939393" /><path d="M1485 404l3 3M1488 404l-3 3" stroke="#bbb" />
        <path d="M1462 410.500h30M1463 445.500h28" stroke="#b2b2b2" />
        <circle cx="1474" cy="428" r="4" strokeWidth="1.300" /><path d="M1483.500 432v-9l-3.500-4h-6a9 9 0 1 0 2 18" strokeWidth="1.300" />
        <text x="1476" y="440" fontFamily="Open Sans" fontWeight="700" fontSize="8.500" fill="#7991a8" stroke="none">2D</text>
        <path d="M1471 468l-5-6c-1-2 1-3 3-1l3 3-3-9c0-2 2-2 3 0l2 7v-10c0-2 2-2 3 0v9l3-8c1-2 3-1 2 1l-2 9 4-5c1-1 3 0 2 2l-5 9-3 3h-5z" />
        <path d="M1466 478l14 13M1480 478l-14 13" strokeWidth="1.200" /><path d="M1465 482v-4h4M1477 477h4v4M1465 487v4h4" strokeWidth="1.300" />
        <circle cx="1482" cy="492" r="4.500" fill="#aeb3b5" /><path d="M1485 495l3 3" strokeWidth="2.500" />
        <path d="M1474 505.500h6l-3 3z" fill="#858585" stroke="none" />
        <circle cx="1486.500" cy="520.500" r="3" fill="#939393" /><path d="M1485 520h3M1485.500 521.500h2" stroke="#bbb" />
      </svg>
    </div>
  );
}

function CommandWindow() {
  const mono = "font-['DejaVu_Sans_Mono',monospace] text-[11.7px]";
  const line = "h-[15px] whitespace-pre rounded-[2px] bg-[#757575] px-[1.5px] leading-[16px]";
  return (
    <div className="absolute bottom-0 left-[298px] w-[893px]">
      <div className={"flex flex-col items-start gap-[4.5px] pb-[3px] pl-[60px] text-[#c6c6c6] " + mono}>
        <div className={line}>Restoring cached viewports - Regenerating layout.</div>
        <div className={line}>Command:</div>
        <div className={line}>Command:</div>
      </div>
      <div className="flex h-[26px] items-center rounded-l-[3px] bg-[#4a515e]">
        <Ic b={[303, 747, 55, 26]}>
          <path d="M307.500 751v18M310 751v18M312.500 751v18" stroke="#c4c7cc" strokeDasharray="1 1.5" />
          <path d="M318 755.500l8 8M326 755.500l-8 8" stroke="#e2e2e2" strokeWidth="1.500" />
          <path d="M339.500 765l8-8" stroke="#dedede" strokeWidth="2.400" strokeLinecap="round" /><path d="M351.500 753.500a3.200 3.200 0 1 0 1 3.500" stroke="#dedede" strokeWidth="2" />
        </Ic>
        <div className={"flex h-[25px] grow items-center self-start rounded-r-[2px] border-b border-t border-t-[#6a6a6a] border-b-[#b4b4b4] bg-[#dcdcdc] italic text-[#777] " + mono}>
          <Ic b={[358, 749, 35, 23]}>
            <rect x="362.500" y="754.500" width="14.500" height="12" stroke="#777" /><path d="M363 756h14" stroke="#777" strokeWidth="2.500" />
            <path d="M364.500 759.500l2 1.500-2 1.500M368 763.500h3" stroke="#777" strokeWidth=".9" /><path d="M379 759h8l-4 4z" fill="#666" />
          </Ic>
          <span className="grow pt-px">Type a command</span>
          <Ic b={[1180, 749, 16, 23]}><path d="M1183.500 763h8l-4-4z" fill="#666" /></Ic>
        </div>
      </div>
    </div>
  );
}

function Canvas() {
  return (
    <div className="relative h-[601px] w-[1491px] overflow-hidden bg-[#8b8b8b]">
      <Drawing />
      <svg className="absolute right-[6px] top-[8px]" width="56" height="14" viewBox="1434 180 56 14" fill="none">
        <rect x="1436.500" y="187" width="10" height="4" fill="#fff" stroke="#444" />
        <path d="M1459 181.500h7v7h-7z" fill="#fff" stroke="#333" /><rect x="1456.500" y="183.500" width="7" height="7.500" fill="#fff" stroke="#333" /><rect x="1458.500" y="186" width="3" height="3" fill="#555" />
        <path d="M1476.500 182.500l8 8M1484.500 182.500l-8 8" stroke="#333" strokeWidth="4" /><path d="M1477 183l7 7M1484 183l-7 7" stroke="#fff" strokeWidth="2" />
      </svg>
      <NavBar />
      <CommandWindow />
    </div>
  );
}

const seg = "flex h-[24px] items-center bg-[#3b4454]";

function StatusBar() {
  const s = "#c4c8ce";
  return (
    <div className="flex h-[31px] pl-[11px]">
      <div className="flex w-[1005px] text-[11.6px] text-[#a4aab4]">
        <div className="relative flex h-[18px] w-[59px] items-center justify-center pt-px">
          <TabShape w={59} h={18} color="#2f3744" d="M0 0h59c-3 4-2 18-9 18H11C4 18 5 4 0 0z" /><span className="relative">Model</span>
        </div>
        <div className="relative flex h-[18px] w-[66px] items-center justify-center pt-px font-bold text-[#f3f4f5]">
          <TabShape w={66} h={18} color="#3b4454" d="M0 0h66c-3 4-2 18-9 18H10C3 18 4 4 0 0z" /><span className="relative text-[11.1px]">Layout1</span>
        </div>
        <div className="relative flex h-[18px] w-[65px] items-center justify-center pt-px">
          <TabShape w={65} h={18} color="#2f3744" d="M2 0h61c-3 4-2 18-9 18H12C5 18 5 4 2 0z" /><span className="relative text-[11.2px]">Layout2</span>
        </div>
        <div className="relative ml-[3px] flex h-[18px] w-[22px] items-center justify-center">
          <TabShape w={22} h={18} color="#2f3744" d="M4 2h18c-2 4-2 14-9 14H2C-1 16 3 6 4 2z" />
          <svg className="relative block" width="9" height="9" viewBox="0 0 9 9"><path d="M4.500 0v9M0 4.500h9" stroke="#b4b8bf" strokeWidth="1.600" /></svg>
        </div>
      </div>
      <div className="flex grow gap-[2px] pt-[2px]">
        <div className={seg + " w-[41px] justify-center text-[11.6px] tracking-[-0.2px] text-[#f0f1f2]"}>PAPER</div>
        <div className={seg}>
          <Ic b={[1063, 775, 24, 24]}><path d="M1067.500 779v15h15M1067.500 789h5v5" stroke={s} strokeWidth="1.100" /></Ic>
          <Ic b={[1087, 775, 24, 24]}><circle cx="1097" cy="788" r="6" stroke={s} /><path d="M1097 788h9M1097 788l6-8" stroke={s} /></Ic>
          <Ic b={[1111, 775, 14, 24]}><path d="M1114 785h7l-3.500 4z" fill="#ddd" /></Ic>
          <Ic b={[1125, 775, 24, 24]}><path d="M1137 779v15" stroke="#58b27c" /><path d="M1131 781l11 10" stroke="#c96a6a" /><path d="M1137 786l5 5" stroke={s} /></Ic>
          <Ic b={[1149, 775, 15, 24]}><path d="M1152.500 785h7l-3.500 4z" fill="#ddd" /></Ic>
          <Ic b={[1164, 775, 24, 24]} className="bg-[#5e93c9]"><path d="M1182.500 778.500l-13.500 13.500h14" stroke="#eef4fa" strokeWidth="1.200" /><path d="M1172 784l4 4" stroke="#eef4fa" strokeWidth="1.500" /><path d="M1187.500 775v24" stroke="#3b4454" /></Ic>
          <Ic b={[1188, 775, 23, 24]} className="bg-[#5e93c9]"><rect x="1193.500" y="781.500" width="13" height="12" stroke="#eef4fa" strokeWidth="1.200" /><rect x="1191.500" y="779.500" width="4.500" height="4" fill="#5e93c9" stroke="#eef4fa" strokeWidth="1.200" /></Ic>
          <Ic b={[1211, 775, 16, 24]}><path d="M1215 785h7l-3.500 4z" fill="#ddd" /></Ic>
        </div>
        <div className={seg}>
          <Ic b={[1229, 775, 23, 24]}><rect x="1232.500" y="779.500" width="15" height="15" stroke={s} strokeDasharray="2 2" /><rect x="1237" y="784" width="6" height="6" stroke={s} /><path d="M1234 781l3 3M1246 781l-3 3M1234 793l3-3" stroke={s} /></Ic>
          <Ic b={[1252, 775, 23, 24]}><path d="M1262 779l2 8 6 7-7-3-7 3 5-7z" fill="#dcdcdc" /><circle cx="1268" cy="782.500" r="2" stroke={s} /></Ic>
          <Ic b={[1275, 775, 23, 24]}><path d="M1285 779l2 8 6 7-7-3-7 3 5-7z" fill="#dcdcdc" /><path d="M1292 779l-3 4h2l-1 3 4-4h-2z" fill="#ddd" /></Ic>
        </div>
        <div className={seg}>
          <Ic b={[1300, 775, 25, 24]}>
            {[0, 45, 90, 135].map((a) => <path key={a} d="M1304.500 787h15.500" stroke="#e4e4e4" strokeWidth="3" transform={`rotate(${a} 1312.500 787)`} />)}
            <circle cx="1312.500" cy="787" r="4.300" stroke="#e4e4e4" strokeWidth="2.500" fill="#3b4454" />
          </Ic>
          <Ic b={[1325, 775, 13, 24]}><path d="M1328 785h7l-3.500 4z" fill="#ddd" /></Ic>
          <Ic b={[1338, 775, 25, 24]}><path d="M1339.500 775v24" stroke="#2a323f" /><path d="M1351.500 779v15M1344 786.500h15" stroke="#e4e4e4" strokeWidth="1.900" /></Ic>
        </div>
        <div className={seg}>
          <Ic b={[1365, 775, 24, 24]}><rect x="1370" y="779.500" width="5.500" height="5" stroke={s} /><circle cx="1381.500" cy="786" r="3.200" stroke={s} /><path d="M1376 789l3.500 5.500h-7z" stroke={s} /></Ic>
        </div>
        <div className={seg}>
          <Ic b={[1391, 775, 25, 24]}><circle cx="1404" cy="786" r="8.500" fill="#3b7cc0" /><path d="M1396 777h8v13h-8z" fill="#8db9e6" fillOpacity=".7" /><path d="M1400 777v12M1394.500 782.500h12" stroke="#fff" /><rect x="1395" y="788" width="7" height="6" fill="#f1b72e" /><path d="M1402 791l4 4 7-8" stroke="#59b85c" strokeWidth="2.800" /></Ic>
          <Ic b={[1416, 775, 28, 24]}><path d="M1424.500 789v5.500h12v-6l-4.500-3.500h-5" stroke="#d98f5f" strokeWidth="1.200" /><path d="M1421.500 785v-4.500a2 2 0 0 1 4 0v6a1.200 1.200 0 0 1-2.400 0v-5" stroke="#d98f5f" /></Ic>
        </div>
        <div className={seg}>
          <Ic b={[1446, 775, 24, 24]}><rect x="1451.500" y="781.500" width="14" height="10.500" stroke={s} /><path d="M1459 784h4v3zM1454 787v3h4z" fill={s} /></Ic>
          <Ic b={[1470, 775, 24, 24]}><path d="M1474 780.500h16M1474 786.500h16M1474 792.500h16" stroke="#dedede" strokeWidth="1.900" /></Ic>
        </div>
      </div>
    </div>
  );
}

function Chrome({ cx }) {
  return (
    <g transform={`translate(${cx} 825)`}>
      <circle r="11.500" fill="#e04a3f" />
      <path d="M-10-5.700A11.500 11.500 0 0 0 1 11.500L5 3-5 3z" fill="#1fa25b" />
      <path d="M11.200-4A11.500 11.500 0 0 1 1 11.500L5 3 3-5z" fill="#fbc42f" />
      <circle r="5.200" fill="#fff" /><circle r="4.100" fill="#3f7ee8" />
    </g>
  );
}

function Taskbar() {
  return (
    <div className="flex h-[39px] overflow-hidden bg-[#d9d9d9] text-[#222]">
      <Ic b={[0, 805, 48, 39]}>
        <path d="M16 818.700l6.500-1v6.600H16zM23.500 817.500l8.300-1.300v8.100h-8.300zM16 825.300h6.500v6.500l-6.500-1zM23.500 825.300h8.300v7.700l-8.300-1.200z" fill="#0a0a0a" />
      </Ic>
      <div className="mt-px flex h-[37px] w-[334px] items-center bg-white text-[14.1px] text-[#3a3a3a]">
        <Ic b={[48, 806, 38, 37]}><circle cx="69" cy="821.500" r="5" stroke="#222" strokeWidth="1.300" /><path d="M65.300 825.300l-6 6.500" stroke="#222" strokeWidth="1.300" /></Ic>
        <span className="whitespace-nowrap">Digite aqui para pesquisar</span>
      </div>
      <Ic b={[382, 805, 49, 39]}><path d="M398.500 820h10v9h-10zM398.500 816v1.500h10V816M398.500 833v-1.500h10V833" stroke="#333" strokeWidth="1.200" /><path d="M413 817v2.500M413 824v8M411.500 821.500h3" stroke="#333" strokeWidth="1.600" /></Ic>
      <Ic b={[431, 805, 49, 39]}>
        <path d="M445.500 815h8l2 2h11v4h-21z" fill="#e0a02c" /><path d="M445.500 818.500h21v14h-21z" fill="#fcd462" /><path d="M449 832.500v-8.500h15v8.500h-4v-4h-7v4z" fill="#3a90d8" />
        <path d="M437 841h32v3h-32z" fill="#0078d7" /><path d="M469 841h8v3h-8z" fill="#72b2e8" />
      </Ic>
      <Ic b={[480, 805, 49, 39]}>
        <Chrome cx={505} /><circle cx="510" cy="830" r="7.500" fill="#4a4b35" /><path d="M506.500 836v-8c0-4 7-4 7 0v8z" fill="#2e2a22" /><ellipse cx="510" cy="829.500" rx="2.400" ry="3.600" fill="#d8b094" /><path d="M506 836c1-3 7-3 8 0z" fill="#c9c3b6" />
        <path d="M485 841h40v3h-40z" fill="#0078d7" />
      </Ic>
      <Ic b={[529, 805, 49, 39]}>
        <Chrome cx={553} /><circle cx="558.500" cy="830" r="7.700" fill="#4f2aa8" />
        <text x="558.500" y="833.300" textAnchor="middle" fontFamily="Open Sans" fontSize="9" fill="#fff">E</text>
        <path d="M534 841h39.500v3H534z" fill="#0078d7" />
      </Ic>
      <Ic b={[578, 805, 49, 39]}>
        <rect x="590" y="813" width="23" height="23" fill="#e3edf8" /><rect x="591" y="814" width="10" height="14" fill="#c8daf0" />
        <text x="602" y="832" textAnchor="middle" fontFamily="Open Sans" fontWeight="800" fontSize="23" fill="#2768ae" textLength="14.500" lengthAdjust="spacingAndGlyphs">R</text>
        <path d="M582 841h39.500v3H582z" fill="#0078d7" />
      </Ic>
      <Ic b={[627, 805, 47, 39]} className="bg-[#efefef]">
        <rect x="639" y="813" width="22" height="23" fill="#fae8e2" />
        <text x="650" y="832" textAnchor="middle" fontFamily="Open Sans" fontWeight="800" fontSize="23" fill="#b8222a" textLength="17" lengthAdjust="spacingAndGlyphs">A</text>
        <path d="M627 841h47v3h-47z" fill="#0078d7" />
      </Ic>
      <div className="grow" />
      <Ic b={[1224, 805, 24, 39]}><path d="M1230 828l6-6 6 6" stroke="#222" strokeWidth="1.300" /></Ic>
      <Ic b={[1248, 805, 24, 39]}><rect x="1255" y="820" width="7.500" height="9" rx="1.500" stroke="#333" strokeWidth="1.200" /><path d="M1262.500 823.500l3-1.500v5.500l-3-1.500M1256 818c2-1.300 4-1.300 6 0M1256 831.300c2 1.300 4 1.300 6 0" stroke="#333" /></Ic>
      <Ic b={[1272, 805, 23, 39]}><rect x="1278" y="821" width="12" height="7.500" fill="#111" /><path d="M1290.500 823v3.500" stroke="#111" strokeWidth="1.500" /><path d="M1275.500 820v3a1.500 1.500 0 0 0 3 0v-3M1277 825v3" stroke="#111" /></Ic>
      <Ic b={[1295, 805, 23, 39]}><path d="M1302 830a11 11 0 0 1 11-11" stroke="#888" /><path d="M1304.500 830.500a8.500 8.500 0 0 1 8.500-8.500M1307.500 830.500a5.500 5.500 0 0 1 5.500-5.500" stroke="#333" strokeWidth="1.100" /><circle cx="1311.500" cy="829.500" r="1.500" fill="#222" /></Ic>
      <Ic b={[1318, 805, 24, 39]}><path d="M1322 822.500h2.500l3-3v11l-3-3h-2.500z" stroke="#333" strokeWidth="1.100" /><path d="M1330 822.500a4 4 0 0 1 0 5" stroke="#333" /><path d="M1332 820.500a6.500 6.500 0 0 1 0 9M1334.500 819a9 9 0 0 1 0 12" stroke="#999" /></Ic>
      <div className="flex w-[34px] flex-col items-center pt-[2px] text-[11.2px] leading-[17.5px]"><span>POR</span><span>PTB2</span></div>
      <div className="flex w-[72px] flex-col items-center pt-[2px] text-[11.2px] leading-[17.5px]"><span>13:05</span><span>04/10/2021</span></div>
      <Ic b={[1448, 805, 52, 39]}>
        <path d="M1460 817h16v12h-9l-3 3v-3h-4z" fill="#0d0d0d" /><path d="M1463 820.500h10M1463 823h10M1463 825.500h6" stroke="#ddd" strokeWidth=".9" />
        <circle cx="1475.500" cy="832" r="7.500" fill="#d6d6d6" stroke="#8a8a8a" />
        <text x="1475.300" y="836" textAnchor="middle" fontFamily="Open Sans" fontSize="11" fill="#111">1</text>
        <path d="M1495.500 806v38" stroke="#aaa" />
      </Ic>
    </div>
  );
}

function AppButton() {
  return (
    <div className="ml-px mt-[2px] h-[41px] w-[39px] shrink-0 border border-[#f0f0f0] border-b-[#555] border-r-[#555] bg-linear-to-b from-[#c9c9c9] to-[#7d7d7d]">
      <svg className="block overflow-visible" width="37" height="38" viewBox="6 5 37 38" fill="none">
        <defs><linearGradient id="red" x1="0" y1="0" x2="1" y2="1"><stop offset="0" stopColor="#ef4038" /><stop offset="1" stopColor="#b01c20" /></linearGradient></defs>
        <text x="20.500" y="32.500" textAnchor="middle" fontFamily="Liberation Sans" fontWeight="700" fontSize="35" fill="url(#red)" textLength="25" lengthAdjust="spacingAndGlyphs">A</text>
        <path d="M9 32l6-5 8-3" stroke="#8f1519" strokeWidth="1.200" />
        <path d="M34.500 22h7l-3.500 4z" fill="#444" />
      </svg>
    </div>
  );
}

export default function App() {
  return (
    <div className="h-[844px] w-[1500px] overflow-hidden bg-[#d2d4d2] font-['Open_Sans','Noto_Sans',sans-serif]">
      <div className="ml-[2px] mt-[2px] flex h-[803px] w-[1497px] bg-[#384354]">
        <div className="ml-[2px] mr-[3px] flex w-[1492px] flex-col">
          <div className="flex h-[46px] bg-[#222933]">
            <AppButton />
            <div className="ml-px flex w-[1450px] flex-col">
              <TitleBar />
              <TabRow />
            </div>
          </div>
          <div className="bg-[#222933]">
            <Ribbon />
            <DocTabs />
          </div>
          <div className="h-[3px] bg-[#3c4657]" />
          <div className="pl-px"><Canvas /></div>
          <div className="bg-[#222933]"><StatusBar /></div>
        </div>
      </div>
      <Taskbar />
    </div>
  );
}
